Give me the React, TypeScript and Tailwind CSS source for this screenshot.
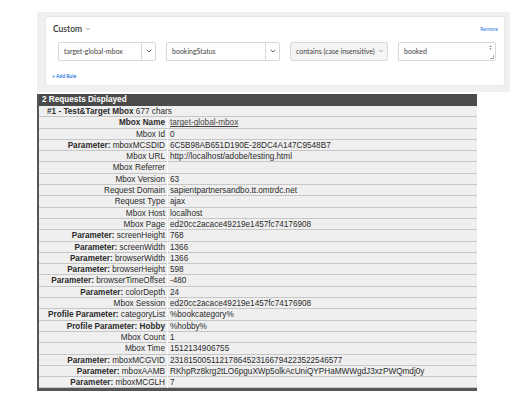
import { ChevronDown } from "lucide-react";

type Row = {
  bold: string;
  label: string;
  value: string;
  link?: boolean;
};

const rows: Row[] = [
  { bold: "Mbox Name", label: "", value: "target-global-mbox", link: true },
  { bold: "", label: "Mbox Id", value: "0" },
  { bold: "Parameter:", label: " mboxMCSDID", value: "6C5B98AB651D190E-28DC4A147C9548B7" },
  { bold: "", label: "Mbox URL", value: "http://localhost/adobe/testing.html" },
  { bold: "", label: "Mbox Referrer", value: "" },
  { bold: "", label: "Mbox Version", value: "63" },
  { bold: "", label: "Request Domain", value: "sapientpartnersandbo.tt.omtrdc.net" },
  { bold: "", label: "Request Type", value: "ajax" },
  { bold: "", label: "Mbox Host", value: "localhost" },
  { bold: "", label: "Mbox Page", value: "ed20cc2acace49219e1457fc74176908" },
  { bold: "Parameter:", label: " screenHeight", value: "768" },
  { bold: "Parameter:", label: " screenWidth", value: "1366" },
  { bold: "Parameter:", label: " browserWidth", value: "1366" },
  { bold: "Parameter:", label: " browserHeight", value: "598" },
  { bold: "Parameter:", label: " browserTimeOffset", value: "-480" },
  { bold: "Parameter:", label: " colorDepth", value: "24" },
  { bold: "", label: "Mbox Session", value: "ed20cc2acace49219e1457fc74176908" },
  { bold: "Profile Parameter:", label: " categoryList", value: "%bookcategory%" },
  { bold: "Profile Parameter: Hobby", label: "", value: "%hobby%" },
  { bold: "", label: "Mbox Count", value: "1" },
  { bold: "", label: "Mbox Time", value: "1512134906755" },
  { bold: "Parameter:", label: " mboxMCGVID", value: "23181500511217864523166794223522546577" },
  { bold: "Parameter:", label: " mboxAAMB", value: "RKhpRz8krg2tLO6pguXWp5olkAcUniQYPHaMWWgdJ3xzPWQmdj0y" },
  { bold: "Parameter:", label: " mboxMCGLH", value: "7" },
];

function SelectBox({ text, width, divided }: { text: string; width: string; divided: boolean }) {
  return (
    <div
      className={`flex h-[19px] items-stretch rounded-[2px] border border-[#d8d8d8] ${width} ${
        divided ? "bg-white" : "bg-[#f4f4f4]"
      }`}
    >
      <span className="flex flex-1 items-center whitespace-nowrap pl-[5px] text-[7px] text-[#444]">
        {text}
      </span>
      <span
        className={`flex items-center justify-center ${
          divided ? "w-[14px] border-l border-[#d8d8d8]" : "w-[22px]"
        }`}
      >
        <ChevronDown
          className={divided ? "h-[8px] w-[8px] text-[#444]" : "h-[6px] w-[6px] text-[#777]"}
          strokeWidth={2.5}
        />
      </span>
    </div>
  );
}

export default function App() {
  return (
    <div className="h-[405px] w-[525px] overflow-hidden bg-white">
      <div
        className="ml-[37px] mt-[12px] w-[473px] bg-[#f0f0f0] pb-[6px] pl-[8px] pr-[5px] pt-[4px]"
        style={{ fontFamily: 'Lato, "Open Sans", sans-serif' }}
      >
        <div className="h-[70px] rounded-[2px] border border-[#e6e6e6] bg-white">
          <div className="flex items-center justify-between pl-[7px] pr-[6px] pt-[6px]">
            <span className="flex items-center gap-[3px] text-[8.5px] font-semibold text-[#333]">
              Custom
              <ChevronDown className="h-[6px] w-[6px] text-[#666]" strokeWidth={2.5} />
            </span>
            <span className="text-[5px] text-[#2d7be5]">Remove</span>
          </div>
          <div className="mt-[6px] flex gap-[10px] pl-[12px]">
            <SelectBox text="target-global-mbox" width="w-[98px]" divided />
            <SelectBox text="bookingStatus" width="w-[114px]" divided />
            <SelectBox text="contains (case insensitive)" width="w-[98px]" divided={false} />
            <div className="relative flex h-[19px] w-[98px] items-center rounded-[2px] border border-[#d8d8d8] bg-white pl-[5px] text-[7px] text-[#444]">
              booked
              <span className="absolute right-[3px] top-[2px] flex flex-col text-[3px] leading-[3px] text-[#666]">
                <span>▲</span>
                <span>▼</span>
              </span>
              <span className="absolute bottom-[1px] right-[1px] h-[4px] w-[4px] border-b border-r border-[#aaa]" />
            </div>
          </div>
          <div className="mt-[12px] pl-[6px] text-[5px] font-bold text-[#2d7be5]">+ Add Rule</div>
        </div>
      </div>

      <div
        className="ml-[37px] mt-[2px] w-[440px] border-b-[3px] border-l-2 border-[#555] bg-[#efefef] text-[8.2px] text-[#2a2a2a]"
        style={{ fontFamily: '"Liberation Sans", Arial, sans-serif' }}
      >
        <div className="flex h-[12px] items-center bg-[#4a4a4a] pl-[3px] pt-[1px] font-bold text-white">
          2 Requests Displayed
        </div>
        <div className="flex h-[11.3px] items-center border-b border-[#c6c6c6] pl-[8px] pt-[1px]">
          <span className="font-bold">#1 - Test&amp;Target Mbox</span>
          <span>&nbsp;677 chars</span>
        </div>
        {rows.map((row, index) => (
          <div
            className="grid h-[11.3px] grid-cols-[129px_1fr] border-b border-[#c6c6c6] leading-[10px]"
            key={index}
          >
            <div className="flex items-center justify-end whitespace-pre border-r border-white pr-[2px] pt-[1px]">
              {row.bold ? <span className="font-bold">{row.bold}</span> : null}
              {row.label ? <span>{row.label}</span> : null}
            </div>
            <div className="flex items-center whitespace-nowrap pl-[2px] pt-[1px]">
              {row.link ? <span className="text-[#444] underline">{row.value}</span> : row.value}
            </div>
          </div>
        ))}
      </div>
    </div>
  );
}
